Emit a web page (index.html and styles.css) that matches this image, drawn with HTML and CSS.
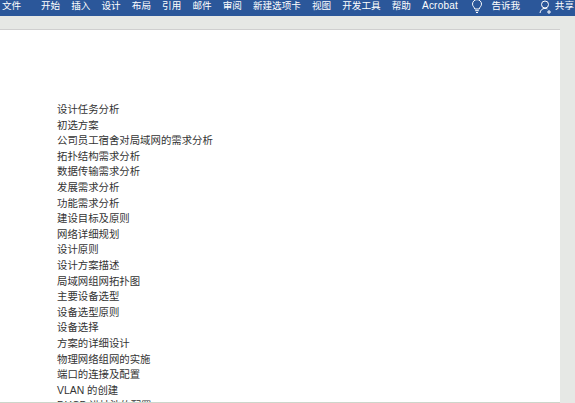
FILE: index.html
```html
<!DOCTYPE html>
<html lang="zh-CN">
<head>
<meta charset="utf-8">
<title>文档</title>
<link rel="stylesheet" href="styles.css">
</head>
<body>
<header class="ribbon">
  <nav class="tabs">
    <span class="tab tab-file">文件</span>
    <span class="tab">开始</span>
    <span class="tab">插入</span>
    <span class="tab">设计</span>
    <span class="tab">布局</span>
    <span class="tab">引用</span>
    <span class="tab">邮件</span>
    <span class="tab">审阅</span>
    <span class="tab">新建选项卡</span>
    <span class="tab">视图</span>
    <span class="tab">开发工具</span>
    <span class="tab">帮助</span>
    <span class="tab tab-latin">Acrobat</span>
  </nav>
  <div class="tell">
    <svg class="bulb" width="12" height="14" viewBox="0 0 12 14" fill="none" stroke="#fff" stroke-width="1"><path d="M3.800 9C3.500 7.300 1.500 6.300 1.500 4.100a4.500 4.500 0 0 1 9 0c0 2.200-2 3.200-2.300 4.900z"/><path d="M4.200 10.700h3.600M5 12.500h2"/></svg>
    <span>告诉我</span>
  </div>
  <div class="share">
    <svg width="13" height="14" viewBox="0 0 13 14" fill="none" stroke="#fff" stroke-width="1"><circle cx="6" cy="4.500" r="3.500"/><path d="M1 13c.4-2.600 2-4.600 5-4.600 1 0 1.700.2 2.400.6M10 10v4M8 12h4"/></svg>
    <span>共享</span>
  </div>
</header>
<main class="workspace">
  <article class="page">
    <p>设计任务分析</p>
    <p>初选方案</p>
    <p>公司员工宿舍对局域网的需求分析</p>
    <p>拓扑结构需求分析</p>
    <p>数据传输需求分析</p>
    <p>发展需求分析</p>
    <p>功能需求分析</p>
    <p>建设目标及原则</p>
    <p>网络详细规划</p>
    <p>设计原则</p>
    <p>设计方案描述</p>
    <p>局域网组网拓扑图</p>
    <p>主要设备选型</p>
    <p>设备选型原则</p>
    <p>设备选择</p>
    <p>方案的详细设计</p>
    <p>物理网络组网的实施</p>
    <p>端口的连接及配置</p>
    <p>VLAN 的创建</p>
    <p>DHCP 进址池的配置</p>
  </article>
</main>
</body>
</html>
```
FILE: styles.css
```css
html, body {
  margin: 0;
  height: 100%;
  overflow: hidden;
}
body {
  display: flex;
  flex-direction: column;
  font-family: "Liberation Sans", "Noto Sans CJK SC", sans-serif;
  background: #e6e8e5;
}
.ribbon {
  height: 16px;
  flex: none;
  display: flex;
  align-items: flex-start;
  background: #2b579a;
  color: #fff;
  font-size: 9.6px;
  line-height: 11px;
  white-space: nowrap;
}
.tabs {
  display: flex;
  gap: 11.1px;
  padding-left: 2px;
}
.tab-file {
  margin-right: 8.7px;
}
.tab-latin {
  font-size: 10px;
  letter-spacing: 0.2px;
}
.tell {
  display: flex;
  align-items: flex-start;
  gap: 8.5px;
  margin-left: 13px;
}
.share {
  display: flex;
  align-items: flex-start;
  gap: 3px;
  margin-left: auto;
  padding-right: 1px;
}
.workspace {
  flex: 1;
  min-height: 0;
  padding: 13px 15px 0 0;
  overflow: hidden;
}
.page {
  height: 100%;
  box-sizing: border-box;
  padding: 72px 0 0 57px;
  border-top: 1px solid #cfcfcf;
  border-bottom: 1px solid #cdd6cb;
  background: #fff;
  color: #333;
  font-size: 10.4px;
  line-height: 15.6px;
  overflow: hidden;
}
.page p {
  margin: 0;
}
```
